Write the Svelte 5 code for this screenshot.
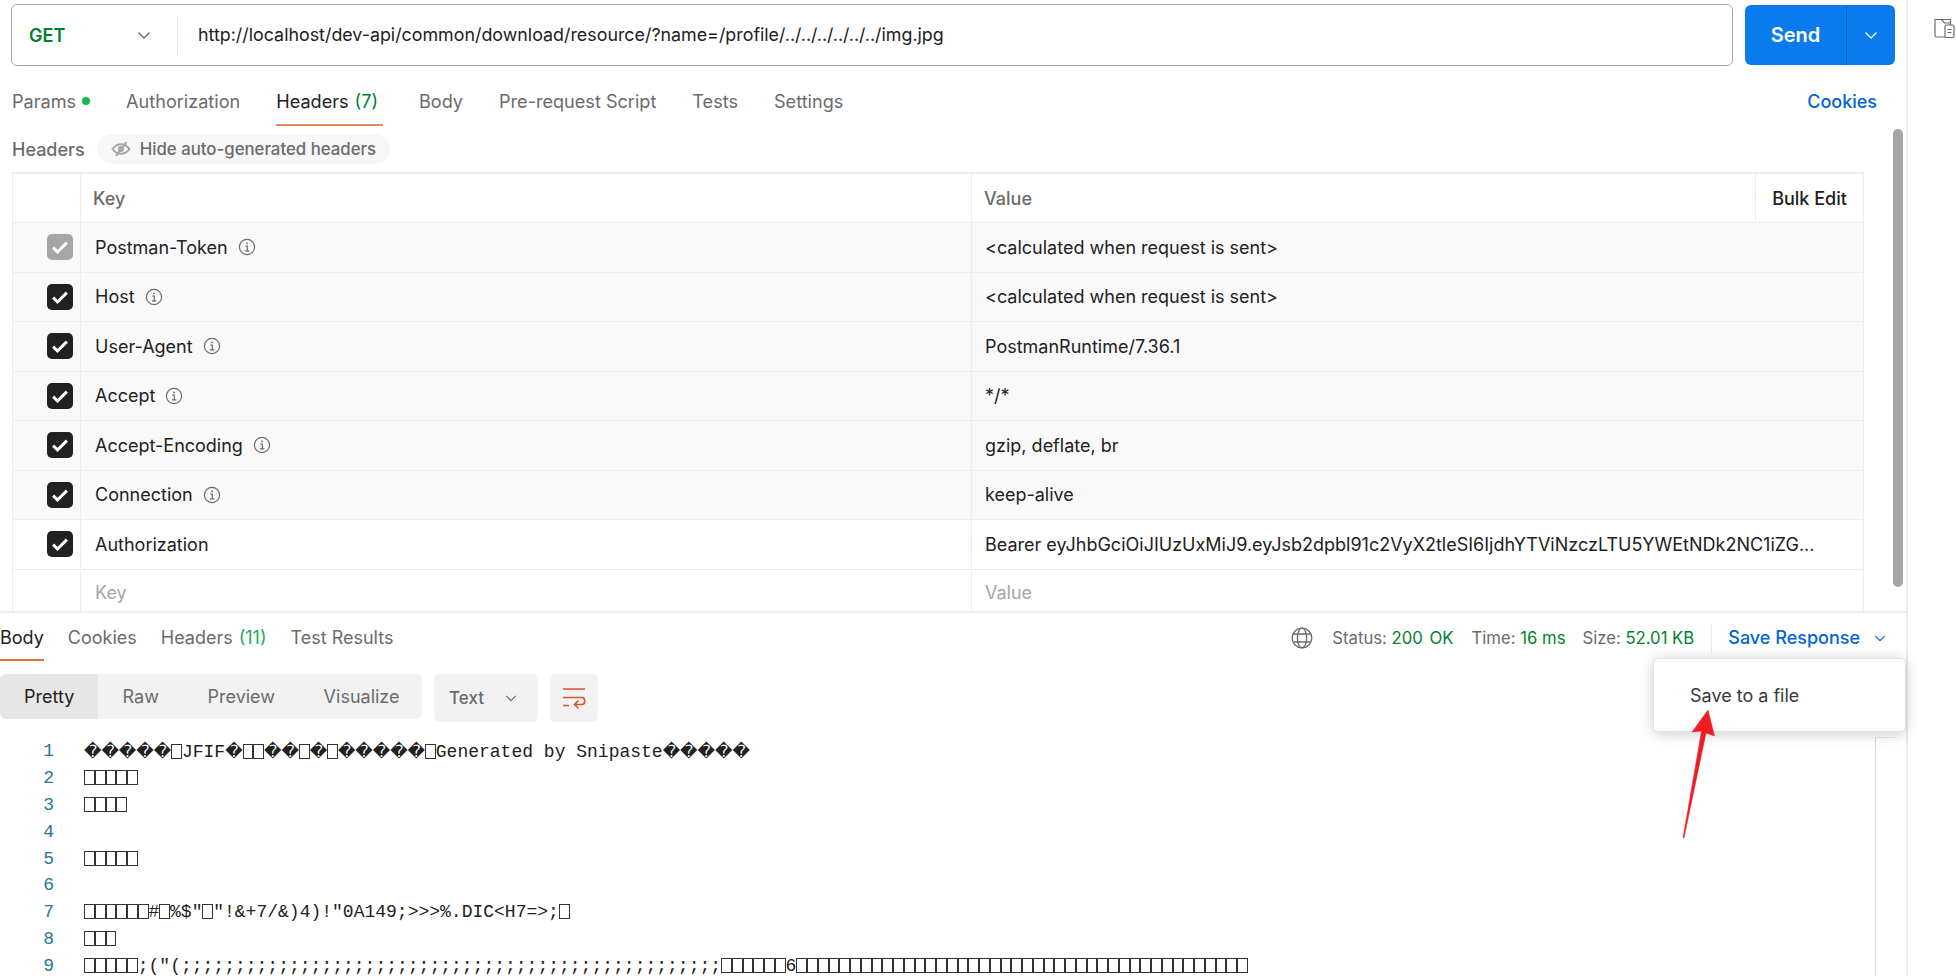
<script lang="ts">
  const tabs = [
    { label: 'Params', dot: true },
    { label: 'Authorization' },
    { label: 'Headers', count: '(7)', active: true },
    { label: 'Body' },
    { label: 'Pre-request Script' },
    { label: 'Tests' },
    { label: 'Settings' }
  ];

  const rows = [
    { key: 'Postman-Token', value: '<calculated when request is sent>', locked: true },
    { key: 'Host', value: '<calculated when request is sent>' },
    { key: 'User-Agent', value: 'PostmanRuntime/7.36.1' },
    { key: 'Accept', value: '*/*' },
    { key: 'Accept-Encoding', value: 'gzip, deflate, br' },
    { key: 'Connection', value: 'keep-alive' },
    {
      key: 'Authorization',
      value: 'Bearer eyJhbGciOiJIUzUxMiJ9.eyJsb2dpbl91c2VyX2tleSI6IjdhYTViNzczLTU5YWEtNDk2NC1iZG...',
      plain: true
    }
  ];

  const B = '\u25AF';
  const D = '\uFFFD';
  const lines = [
    `${D.repeat(5)}${B}JFIF${D}${B}${B}${D}${D}${B}${D}${B}${D.repeat(5)}${B}Generated by Snipaste${D.repeat(5)}`,
    B.repeat(5),
    B.repeat(4),
    '',
    B.repeat(5),
    '',
    `${B.repeat(6)}#${B}%$"${B}"!&+7/&)4)!"0A149;>>>%.DIC<H7=>;${B}`,
    B.repeat(3),
    `${B.repeat(5)};("(${';'.repeat(50)}${B.repeat(6)}6${B.repeat(42)}`
  ];

  // diamonds come from a wider fallback font, missing glyphs render as boxes
  function runs(line: string) {
    return line.match(/\uFFFD+|\u25AF|[^\uFFFD\u25AF]+/g) ?? [];
  }
</script>

{#snippet chevron(cls)}
  <svg class={cls} viewBox="0 0 16 16" fill="none" stroke="currentColor" stroke-width="1.3"><path d="M2.5 5.5 8 11l5.5-5.5" /></svg>
{/snippet}

{#snippet info()}
  <svg class="info" viewBox="0 0 18 18" fill="none" stroke="#6b6b6b" stroke-width="1.2">
    <circle cx="9" cy="9" r="7.6" />
    <path d="M7.2 8h2.1v4.6M7 12.8h4.4" />
    <circle cx="9" cy="5.4" r=".9" fill="#6b6b6b" stroke="none" />
  </svg>
{/snippet}

<div class="app">
  <main class="main">
    <section class="request">
      <div class="url-row">
        <div class="url-box">
          <div class="method">
            <span>GET</span>
            {@render chevron('method-chevron')}
          </div>
          <div class="url">http://localhost/dev-api/common/download/resource/?name=/profile/../../../../../../img.jpg</div>
        </div>
        <div class="send">
          <span class="send-label">Send</span>
          <span class="send-more">{@render chevron('send-chevron')}</span>
        </div>
      </div>

      <div class="req-tabs">
        {#each tabs as t}
          <div class="req-tab" class:active={t.active}>
            {t.label}
            {#if t.count}<span class="count">{t.count}</span>{/if}
            {#if t.dot}<i class="dot"></i>{/if}
          </div>
        {/each}
        <div class="cookies">Cookies</div>
      </div>

      <div class="headers-bar">
        <span class="headers-title">Headers</span>
        <span class="hide-pill">
          <svg viewBox="0 0 20 16" width="20" height="16" fill="none" stroke="#a6a6a6" stroke-width="2">
            <path d="M1.5 8C4 4.6 7 3.2 10 3.2s6 1.4 8.5 4.8C16 11.4 13 12.8 10 12.8S4 11.4 1.5 8Z" />
            <circle cx="10" cy="8" r="2" />
            <path d="M15.5 1 5 15" />
          </svg>
          Hide auto-generated headers
        </span>
      </div>

      <div class="table">
        <div class="tr head">
          <div class="c-check"></div>
          <div class="c-key">Key</div>
          <div class="c-value">Value</div>
          <div class="c-bulk">Bulk Edit</div>
        </div>
        {#each rows as r}
          <div class="tr" class:auto={!r.plain}>
            <div class="c-check">
              <span class="check" class:locked={r.locked}>
                <svg viewBox="0 0 16 16" width="20" height="20" fill="none" stroke="#fff" stroke-width="2.4"><path d="M2.5 8.5 6 12l7.5-7.5" /></svg>
              </span>
            </div>
            <div class="c-key">
              {r.key}
              {#if !r.plain}{@render info()}{/if}
            </div>
            <div class="c-value wide">{r.value}</div>
          </div>
        {/each}
        <div class="tr empty">
          <div class="c-check"></div>
          <div class="c-key">Key</div>
          <div class="c-value wide">Value</div>
        </div>
      </div>
    </section>

    <section class="response">
      <div class="res-bar">
        <div class="res-tab active">Body</div>
        <div class="res-tab">Cookies</div>
        <div class="res-tab">Headers <span class="count light">(11)</span></div>
        <div class="res-tab">Test Results</div>
        <div class="stats">
          <svg class="globe" viewBox="0 0 22 22" fill="none" stroke="#6b6b6b" stroke-width="1.3">
            <circle cx="11" cy="11" r="9.8" />
            <ellipse cx="11" cy="11" rx="4.6" ry="9.8" />
            <path d="M2.4 7h17.2M2.4 15h17.2" />
          </svg>
          <span class="stat status">Status: <b>200 OK</b></span>
          <span class="stat time">Time: <b>16 ms</b></span>
          <span class="stat size">Size: <b>52.01 KB</b></span>
          <span class="save">Save Response {@render chevron('save-chevron')}</span>
        </div>
      </div>

      <div class="toolbar">
        <div class="modes">
          <span class="mode on">Pretty</span>
          <span class="mode">Raw</span>
          <span class="mode">Preview</span>
          <span class="mode">Visualize</span>
        </div>
        <div class="lang">Text {@render chevron('lang-chevron')}</div>
        <div class="wrap">
          <svg viewBox="0 0 24 24" width="24" height="24" fill="none" stroke="#d9542b" stroke-width="1.6">
            <path d="M1 3h22M1 11.5h19c3.6 0 3.6 7 0 7h-7M1 19.5h6M16.5 14.5l-4 4 4 4" />
          </svg>
        </div>
      </div>

      <div class="editor">
        {#each lines as line, i}
          <div class="line">
            <span class="ln">{i + 1}</span>
            <span class="code">
              {#each runs(line) as run}
                {#if run === B}<i class="tofu"></i>{:else}<span class:diamond={run[0] === D}>{run}</span>{/if}
              {/each}
            </span>
          </div>
        {/each}
        <div class="ruler"></div>
      </div>
    </section>

    <div class="scrollbar"></div>

    <div class="menu">Save to a file</div>

    <svg class="arrow" viewBox="0 0 40 132" width="40" height="132">
      <path d="M2 130 20.5 23 11 24 27 2 33.5 28 25 25 3 130Z" fill="#ee1c25" stroke="#ee1c25" stroke-width=".5" />
    </svg>
  </main>

  <aside class="side">
    <svg viewBox="0 0 24 24" width="24" height="24" fill="none" stroke="#6b6b6b" stroke-width="1.2">
      <path d="M13 21H4.5A1.5 1.5 0 0 1 3 19.5v-16h6.5l3 3.5h6V3.5H9.5M18.5 7v2" />
      <rect x="13" y="9" width="9" height="12.5" rx="1.5" />
      <path d="M15.5 13.5h4M15.5 16.5h4" />
    </svg>
  </aside>
</div>

<style>
  :global(body) {
    margin: 0;
    background: #fff;
    overflow: hidden;
  }
  .app {
    display: flex;
    width: 1956px;
    height: 976px;
    overflow: hidden;
    font-family: Inter, "Liberation Sans", sans-serif;
    font-size: 18px;
    color: #212121;
  }
  .main {
    position: relative;
    width: 1906px;
    flex: none;
    border-right: 2px solid #ededed;
  }
  .side {
    flex: 1;
    padding: 16px 0 0 24px;
  }
  .request {
    height: 613px;
    box-sizing: border-box;
    border-bottom: 2px solid #ededed;
  }
  .url-row {
    display: flex;
    gap: 12px;
    padding: 4px 11px 0;
  }
  .url-box {
    display: flex;
    align-items: center;
    width: 1722px;
    height: 62px;
    box-sizing: border-box;
    border: 1px solid #a6a6a6;
    border-radius: 6px;
  }
  .method {
    display: flex;
    align-items: center;
    justify-content: space-between;
    width: 166px;
    height: 38px;
    box-sizing: border-box;
    padding: 0 25px 0 17px;
    border-right: 1px solid #e6e6e6;
    color: #007f31;
    font-weight: 600;
    font-size: 18px;
  }
  .method-chevron {
    width: 16px;
    height: 16px;
    color: #6b6b6b;
  }
  .url {
    padding: 0 0 1px 20px;
    font-size: 17.85px;
    color: #212121;
  }
  .send {
    display: flex;
    width: 150px;
    height: 60px;
    margin-top: 1px;
    border-radius: 6px;
    background: #097bed;
    color: #fff;
  }
  .send-label {
    display: flex;
    align-items: center;
    justify-content: center;
    width: 101px;
    font-size: 20px;
    font-weight: 600;
    border-right: 1px solid #0265d2;
  }
  .send-more {
    flex: 1;
    display: flex;
    align-items: center;
    justify-content: center;
  }
  .send-chevron {
    width: 16px;
    height: 16px;
  }
  .req-tabs {
    display: flex;
    gap: 36px;
    height: 59px;
    box-sizing: border-box;
    padding: 0 29px 0 12px;
    margin-top: 1px;
  }
  .req-tab {
    display: flex;
    align-items: center;
    gap: 6px;
    height: 59px;
    box-sizing: border-box;
    padding-top: 10px;
    font-size: 18.1px;
    color: #6b6b6b;
    border-bottom: 2px solid transparent;
  }
  .req-tab.active {
    color: #212121;
    padding-right: 5px;
    border-bottom-color: #e08a63;
  }
  .count {
    color: #007f31;
  }
  .count.light {
    color: #26a65b;
  }
  .dot {
    width: 8px;
    height: 8px;
    border-radius: 50%;
    background: #0cbb52;
  }
  .cookies {
    margin-left: auto;
    align-self: center;
    padding-top: 10px;
    color: #0265d2;
    font-size: 18px;
    font-weight: 500;
  }
  .headers-bar {
    display: flex;
    align-items: center;
    gap: 12px;
    height: 46px;
    padding: 0 12px;
  }
  .headers-title {
    font-weight: 500;
    font-size: 18px;
    color: #6b6b6b;
  }
  .hide-pill {
    display: flex;
    align-items: center;
    gap: 9px;
    height: 30px;
    padding: 0 14px;
    border-radius: 15px;
    background: #f7f7f7;
    color: #6b6b6b;
    font-size: 16.8px;
    font-weight: 500;
  }
  .table {
    width: 1852px;
    margin-left: 12px;
    height: 442px;
    border: solid #ededed;
    border-width: 2px 1px 0;
    box-sizing: border-box;
  }
  .tr {
    display: flex;
    height: 49.5px;
    box-sizing: border-box;
    border-bottom: 1px solid #ededed;
    font-size: 18px;
  }
  .tr.auto {
    background: #f9f9f9;
  }
  .tr.head {
    height: 49px;
    font-weight: 500;
    color: #6b6b6b;
  }
  .tr.empty {
    border-bottom: 0;
    height: 43px;
    padding-top: 2px;
    color: #a6a6a6;
  }
  .c-check {
    flex: none;
    width: 68px;
    box-sizing: border-box;
    padding-right: 7px;
    display: flex;
    align-items: center;
    justify-content: flex-end;
    border-right: 1px solid #ededed;
  }
  .c-key {
    flex: none;
    display: flex;
    align-items: center;
    gap: 10px;
    width: 891px;
    box-sizing: border-box;
    padding-left: 14px;
    border-right: 1px solid #ededed;
  }
  .c-value {
    flex: 1;
    display: flex;
    align-items: center;
    padding-left: 13px;
    white-space: nowrap;
    overflow: hidden;
  }
  .c-bulk {
    flex: none;
    width: 107px;
    display: flex;
    align-items: center;
    justify-content: center;
    border-left: 1px solid #ededed;
    color: #212121;
  }
  .head .c-key {
    padding-left: 12px;
  }
  .head .c-value {
    padding-left: 12px;
  }
  .check {
    display: flex;
    align-items: center;
    justify-content: center;
    width: 26px;
    height: 26px;
    border-radius: 5px;
    background: #212121;
  }
  .check.locked {
    background: #a6a6a6;
  }
  .info {
    width: 18px;
    height: 18px;
  }
  .res-bar {
    display: flex;
    height: 48px;
    align-items: stretch;
    gap: 24px;
  }
  .res-tab {
    display: flex;
    align-items: center;
    gap: 6px;
    padding-top: 3px;
    color: #6b6b6b;
    font-size: 18px;
    height: 48px;
    box-sizing: border-box;
    border-bottom: 2px solid transparent;
  }
  .res-tab.active {
    color: #212121;
    border-bottom-color: #e0703f;
  }
  .stats {
    margin-left: auto;
    display: flex;
    align-items: center;
    padding: 1px 19px 0 0;
    font-size: 16.7px;
    color: #6b6b6b;
  }
  .globe {
    width: 22px;
    height: 22px;
    margin-right: 19px;
  }
  .stat b {
    font-weight: 400;
    color: #007f31;
  }
  .status {
    margin-right: 18px;
  }
  .status b {
    word-spacing: 2px;
  }
  .time {
    margin-right: 17px;
  }
  .size {
    padding-right: 17px;
    border-right: 1px solid #ededed;
    height: 30px;
    line-height: 30px;
  }
  .save {
    display: flex;
    align-items: center;
    gap: 13px;
    padding-left: 16px;
    color: #0265d2;
    font-weight: 500;
    font-size: 18px;
  }
  .save-chevron {
    width: 14px;
    height: 14px;
  }
  .toolbar {
    display: flex;
    align-items: flex-start;
    gap: 12px;
    padding-top: 13px;
  }
  .modes {
    display: flex;
    width: 422px;
    height: 45px;
    border-radius: 6px;
    overflow: hidden;
    background: #f2f2f2;
    color: #6b6b6b;
    font-size: 18px;
  }
  .mode {
    display: flex;
    align-items: center;
    padding: 0 24.3px;
  }
  .mode.on {
    width: 99px;
    box-sizing: border-box;
    padding: 0 24px;
    background: #e6e6e6;
    color: #212121;
  }
  .lang {
    display: flex;
    align-items: center;
    justify-content: space-between;
    width: 104px;
    height: 48px;
    box-sizing: border-box;
    padding: 0 20px 0 15px;
    border-radius: 6px;
    background: #f2f2f2;
    color: #6b6b6b;
    font-weight: 500;
    font-size: 17px;
  }
  .lang-chevron {
    width: 14px;
    height: 14px;
  }
  .wrap {
    display: flex;
    align-items: center;
    justify-content: center;
    width: 48px;
    height: 48px;
    border-radius: 6px;
    background: #f2f2f2;
  }
  .editor {
    position: relative;
    height: 254px;
    padding-top: 16px;
    box-sizing: border-box;
    font-family: "Liberation Mono", "DejaVu Sans Mono", monospace;
    font-size: 18px;
    color: #212121;
  }
  .line {
    display: flex;
    height: 26.9px;
    line-height: 26.9px;
    white-space: pre;
  }
  .ln {
    width: 54px;
    text-align: right;
    color: #237893;
  }
  .code {
    margin-left: 30px;
  }
  .code .diamond {
    font-family: "DejaVu Sans", sans-serif;
    font-size: 17px;
  }
  .tofu {
    display: inline-block;
    width: 10.76px;
    height: 15px;
    box-sizing: border-box;
    border: 1px solid #333;
    vertical-align: -2px;
  }
  .ruler {
    position: absolute;
    left: 1875px;
    top: 15px;
    bottom: 0;
    width: 20px;
    border-left: 1px solid #d6d6d6;
    border-top: 1px solid #e6e6e6;
  }
  .scrollbar {
    position: absolute;
    left: 1893px;
    top: 129px;
    width: 10px;
    height: 458px;
    border-radius: 5px;
    background: #a6a6a6;
  }
  .menu {
    position: absolute;
    left: 1653px;
    top: 658px;
    width: 253px;
    height: 74px;
    box-sizing: border-box;
    padding: 27px 0 0 36px;
    border-radius: 5px;
    border: 1px solid #e0e0e0;
    background: #fff;
    box-shadow: 0 2px 14px rgba(0, 0, 0, 0.2);
    font-size: 18px;
    line-height: 20px;
    color: #3a3a3a;
  }
  .arrow {
    position: absolute;
    left: 1681px;
    top: 708px;
  }
</style>
